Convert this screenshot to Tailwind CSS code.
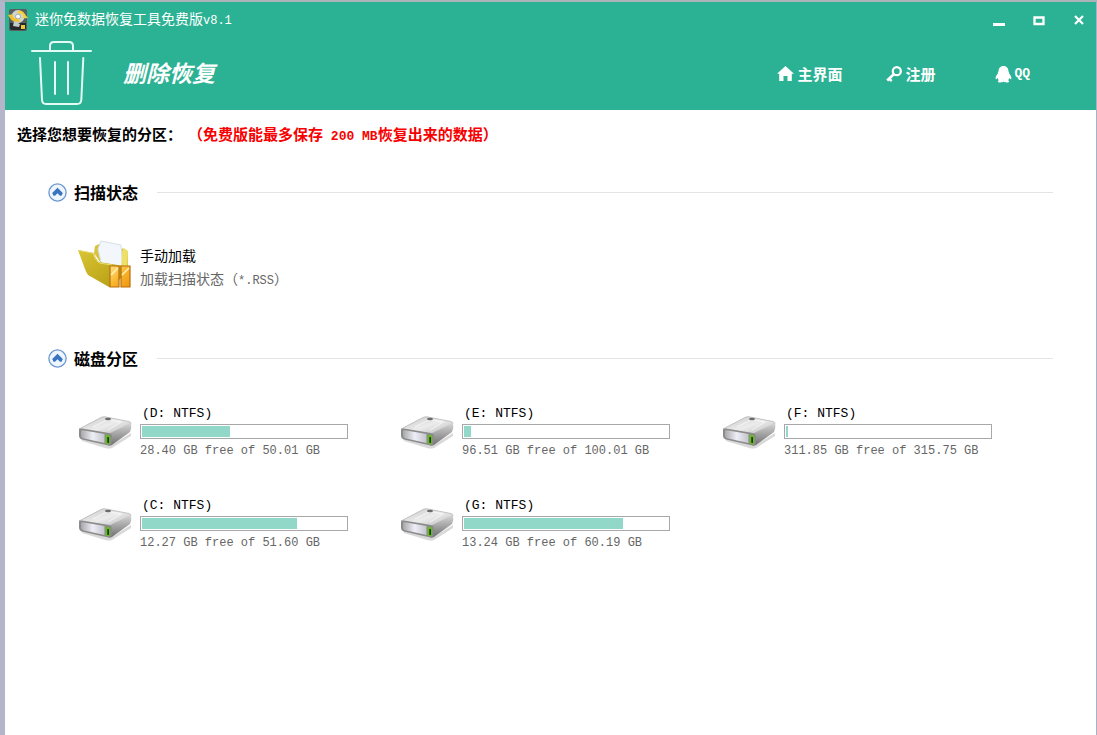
<!doctype html>
<html lang="zh-CN">

<head>
	<meta charset="utf-8" />
	<meta name="viewport" content="width=device-width, initial-scale=1" />
	<title>迷你兔数据恢复工具</title>
	<script src="https://cdn.jsdelivr.net/npm/@tailwindcss/browser@4"></script>
</head>

<body class="min-h-screen flex flex-col bg-white text-black border-t-2 border-l-5 border-r border-t-[#a9b3b8] border-l-[#b4b4cb] border-r-[#a9b0c8] font-['Noto_Sans_CJK_SC',sans-serif]">

	<!-- shared icons -->
	<svg class="size-0" aria-hidden="true">
		<defs>
			<linearGradient id="driveTop" x1="0" y1="0" x2="1" y2="1">
				<stop offset="0" stop-color="#c4c4c4" />
				<stop offset="0.5" stop-color="#ececec" />
				<stop offset="1" stop-color="#b4b4b4" />
			</linearGradient>
			<linearGradient id="driveSide" x1="0" y1="0" x2="0" y2="1">
				<stop offset="0" stop-color="#d6d6d6" />
				<stop offset="1" stop-color="#6e6e6e" />
			</linearGradient>
			<linearGradient id="driveFront" x1="0" y1="0" x2="1" y2="0">
				<stop offset="0" stop-color="#a8a8ac" />
				<stop offset="0.5" stop-color="#eeeef6" />
				<stop offset="1" stop-color="#c4c4cc" />
			</linearGradient>
			<linearGradient id="folderBody" x1="0" y1="0" x2="1" y2="1">
				<stop offset="0" stop-color="#d9c534" />
				<stop offset="1" stop-color="#b39a10" />
			</linearGradient>
			<linearGradient id="boxBody" x1="0" y1="0" x2="1" y2="1">
				<stop offset="0" stop-color="#ffe08a" />
				<stop offset="0.5" stop-color="#f9b52c" />
				<stop offset="1" stop-color="#ee9410" />
			</linearGradient>
		</defs>
		<symbol id="drive" viewBox="0 0 54 36">
			<path d="M3 22 L32 31 L53 18 L53 21 L34 33 Q31 34 27 33 L4 26z" fill="#000" opacity="0.15" />
			<path d="M1 14 L23 2.500 Q25 1.500 27 1.800 L51 6.500 Q53 7 53 9 L31 20z" fill="url(#driveTop)" stroke="#a5a5a5" stroke-width="0.6" />
			<path d="M30 19 L53 8 Q54 13 52 17 L34 30 Q31.500 31.500 29.500 30z" fill="url(#driveSide)" />
			<path d="M1 14.500 Q1.500 13.300 4 13.500 L31 18 Q34 18.500 34 21.500 L33.500 28.500 Q33 31 29 30.300 L4 24.500 Q1 23.500 1 20.500z" fill="#8b8b8b" />
			<path d="M3 16 Q3 15 5 15.300 L26.500 19 L26.500 28 L5 23.200 Q3 22.500 3 20.500z" fill="url(#driveFront)" />
			<path d="M15 12 L30 4.500 L43 7 L30 15" fill="none" stroke="#fff" stroke-width="0.8" opacity="0.8" />
			<ellipse cx="30" cy="4" rx="3" ry="1.300" fill="#6c6c6c" />
			<path d="M27.500 19.500 L31.500 20.300 Q32.500 20.500 32.400 22 L32 28.500 Q31.500 29.500 30 29.300 L27.500 28.800z" fill="#6cb52d" />
			<path d="M29.300 22 L31 22.300 V28 L29.300 27.700z" fill="#173d0c" />
		</symbol>
		<symbol id="chevron" viewBox="0 0 19 19">
			<circle cx="9.500" cy="9.500" r="8.600" fill="#eef5fc" stroke="#6b96cf" stroke-width="1.300" />
			<path d="M9.500 4.800 L14.800 10 L13.500 12.800 H12 L9.500 10.300 L7 12.800 H5.500 L4.200 10z" fill="#3a74c0" />
		</symbol>
	</svg>

	<header class="bg-[#2bb193] text-white">
		<div class="flex items-center justify-between h-9 pl-[3px] pr-[9px]">
			<div class="flex items-center gap-[7px]">
				<svg class="w-5 h-6" viewBox="0 0 20 24" aria-hidden="true">
					<rect x="1" y="1" width="18" height="22" rx="2" fill="#56605e" />
					<path d="M2 15 H18 V20 Q18 22 16 22 H4 Q2 22 2 20z" fill="#252b2a" />
					<circle cx="10" cy="8.500" r="6.500" fill="#cfd6d4" />
					<circle cx="10" cy="8.500" r="2.500" fill="#f6f8f7" stroke="#85908d" stroke-width="0.700" />
					<path d="M0 7 L5 6 L4.500 8 Q7 12 11 11 L12 13.500 Q5 15 2 10z" fill="#f2c22b" />
					<path d="M20 10 L14 10.500 L15.300 8.500 Q14 5 10 5.500 L9 3 Q15 1.500 17.500 7z" fill="#f5cf42" />
					<path d="M6 13 L12 16 L11 19 L5 18z" fill="#c3cbc9" />
					<rect x="13" y="17" width="4" height="4" fill="#f0c437" />
				</svg>
				<h1 class="text-[14px] leading-5 font-['Liberation_Mono','Noto_Sans_CJK_SC',monospace]">迷你免数据恢复工具免费版<span class="text-[12px]">v8.1</span></h1>
			</div>
			<div class="flex items-center gap-6">
				<button type="button" aria-label="最小化" class="size-4">
					<svg class="size-4" viewBox="0 0 16 16"><path d="M2 11h12v3H2z" fill="#fff" /></svg>
				</button>
				<button type="button" aria-label="最大化" class="size-4">
					<svg class="size-4" viewBox="0 0 16 16"><path d="M3.500 5.500h9v6.500h-9z" fill="none" stroke="#fff" stroke-width="2.300" /></svg>
				</button>
				<button type="button" aria-label="关闭" class="size-4">
					<svg class="size-4" viewBox="0 0 16 16"><path d="M4 4l8 8M12 4l-8 8" stroke="#fff" stroke-width="2.200" /></svg>
				</button>
			</div>
		</div>

		<div class="flex items-center h-18 pl-[26px] pr-[66px]">
			<svg class="w-[61px] h-[66px]" viewBox="0 0 61 66" fill="none" stroke="#e4fbf5" stroke-width="2" stroke-linecap="round" stroke-linejoin="round" aria-hidden="true">
				<path d="M1 10h59" />
				<path d="M19 10V5q0-4 4-4h15q4 0 4 4v5" />
				<path d="M9 17l2 42q.3 4 4 4h31q4 0 4.300-4l2-42" />
				<path d="M24 21v32M37 21v32" />
			</svg>
			<h2 class="ml-[31px] pb-1 text-[23px] leading-8 font-bold italic">删除恢复</h2>
			<nav class="ml-auto text-[15px] leading-6 font-bold">
				<ul class="grid grid-cols-[109px_109px_auto]">
					<li>
						<a href="#" class="flex items-center gap-[3px] hover:text-gray-200">
							<svg class="size-[17px]" viewBox="0 0 17 17" fill="currentColor"><path d="M8.500 0L17 7.800h-2.200V15H10.500v-5h-4v5H2.200V7.800H0z" /></svg>
							主界面
						</a>
					</li>
					<li>
						<a href="#" class="flex items-center gap-[2px] hover:text-gray-200">
							<svg class="size-[17px]" viewBox="0 0 17 17" fill="none" stroke="currentColor"><circle cx="10.800" cy="5.200" r="4" stroke-width="2.300" /><path d="M8 8L1.200 14.500M2.800 12.800l3 2.200" stroke-width="2.600" /></svg>
							注册
						</a>
					</li>
					<li>
						<a href="#" class="flex items-center gap-[2px] hover:text-gray-200">
							<svg class="size-[17px]" viewBox="0 0 17 17" fill="currentColor"><path d="M8.500 0C5 0 3.500 2.500 3.500 5.500C2.800 6.200 2.700 7 2.900 7.600C1.200 9.500.3 11.500.7 13c.3.700 1.200.2 2-.9.200.8.600 1.500 1.200 2.100C2.300 15 2.500 16.500 5 16.500c1.700 0 2.800-.3 3.500-.9.700.6 1.800.9 3.500.9 2.500 0 2.700-1.500 1.100-2.300.600-.6 1-1.300 1.200-2.100.8 1.100 1.700 1.600 2 .9.400-1.500-.5-3.500-2.200-5.400.2-.6.100-1.400-.6-2.100C13.500 2.500 12 0 8.500 0z" /></svg>
							<span class="text-[13px] font-['Liberation_Mono',monospace]">QQ</span>
						</a>
					</li>
				</ul>
			</nav>
		</div>
	</header>

	<main class="pt-3">
		<p class="flex gap-1.5 pl-3 text-[15px] leading-6 font-bold">
			<span>选择您想要恢复的分区：</span>
			<span class="text-[#f80000]">（免费版能最多保存<span class="text-[13px] font-['Liberation_Mono',monospace]"> 200 MB</span>恢复出来的数据）</span>
		</p>

		<section class="mt-[33px] px-[43px]">
			<div class="flex items-center gap-[7px] h-5">
				<button type="button" aria-label="收起扫描状态" class="size-[19px]"><svg class="size-[19px]"><use href="#chevron" /></svg></button>
				<h3 class="text-[16px] leading-5 font-bold">扫描状态</h3>
				<div class="flex-1 h-px ml-3 bg-[#e4e4e4]"></div>
			</div>
			<a href="#" class="flex items-center gap-2 w-fit mt-9 ml-[30px]">
				<svg class="size-[54px]" viewBox="0 0 54 54" aria-hidden="true">
					<path d="M16 14 L17 7 L21 5 L47 10 L50 13 L50 34 L36 44z" fill="#d8c43c" />
					<path d="M20 10 L23 2 L43 6 L45 31 L24 27z" fill="#f3f7fc" stroke="#d5dfea" />
					<path d="M44 13 L46 9 L50 12 L49 30 L43 31z" fill="#ecdf6a" />
					<path d="M0 11 L16 14 Q18 21 21 23 L46 27 Q49 28 48 32 L36 48 L31 48 L10 36 Q8 33 7 30z" fill="url(#folderBody)" />
					<path d="M1 11.500 L15 14.300 Q17 21 21 24 L34 26" fill="none" stroke="#eadb70" />
					<g fill="url(#boxBody)" stroke="#b96f0c" stroke-width="1.200">
						<path d="M32 27h9v21h-9zM43 27h9v21h-9z" />
					</g>
					<path d="M33 36L40 29M44 36L51 29" stroke="#fff0b8" stroke-width="1.500" />
				</svg>
				<span class="pt-1.5 text-[14px] leading-[23px]">
					<span class="block">手动加载</span>
					<span class="block text-[#666]">加载扫描状态（<span class="text-[12px] font-['Liberation_Mono',monospace]">*.RSS</span>）</span>
				</span>
			</a>
		</section>

		<section class="mt-[55px] px-[43px]">
			<div class="flex items-center gap-[7px] h-5">
				<button type="button" aria-label="收起磁盘分区" class="size-[19px]"><svg class="size-[19px]"><use href="#chevron" /></svg></button>
				<h3 class="text-[16px] leading-5 font-bold">磁盘分区</h3>
				<div class="flex-1 h-px ml-3 bg-[#e4e4e4]"></div>
			</div>
			<ul class="grid grid-cols-3 gap-y-8 mt-[35px] pl-[30px] pr-[9px] font-['Liberation_Mono',monospace]">
				<li>
					<a href="#" class="flex items-center gap-2">
						<svg class="w-[54px] h-9"><use href="#drive" /></svg>
						<span class="w-[208px]">
							<span class="block pl-0.5 text-[13px] leading-[21px]">(D: NTFS)</span>
							<span class="block h-[15px] p-px border border-[#a8a8a8]"><span class="block h-full bg-[#91d8c8]" style="width: 43.2%"></span></span>
							<span class="block text-[12px] leading-6 text-[#666] whitespace-nowrap">28.40 GB free of 50.01 GB</span>
						</span>
					</a>
				</li>
				<li>
					<a href="#" class="flex items-center gap-2">
						<svg class="w-[54px] h-9"><use href="#drive" /></svg>
						<span class="w-[208px]">
							<span class="block pl-0.5 text-[13px] leading-[21px]">(E: NTFS)</span>
							<span class="block h-[15px] p-px border border-[#a8a8a8]"><span class="block h-full bg-[#91d8c8]" style="width: 3.5%"></span></span>
							<span class="block text-[12px] leading-6 text-[#666] whitespace-nowrap">96.51 GB free of 100.01 GB</span>
						</span>
					</a>
				</li>
				<li>
					<a href="#" class="flex items-center gap-2">
						<svg class="w-[54px] h-9"><use href="#drive" /></svg>
						<span class="w-[208px]">
							<span class="block pl-0.5 text-[13px] leading-[21px]">(F: NTFS)</span>
							<span class="block h-[15px] p-px border border-[#a8a8a8]"><span class="block h-full bg-[#91d8c8]" style="width: 1.2%"></span></span>
							<span class="block text-[12px] leading-6 text-[#666] whitespace-nowrap">311.85 GB free of 315.75 GB</span>
						</span>
					</a>
				</li>
				<li>
					<a href="#" class="flex items-center gap-2">
						<svg class="w-[54px] h-9"><use href="#drive" /></svg>
						<span class="w-[208px]">
							<span class="block pl-0.5 text-[13px] leading-[21px]">(C: NTFS)</span>
							<span class="block h-[15px] p-px border border-[#a8a8a8]"><span class="block h-full bg-[#91d8c8]" style="width: 76.2%"></span></span>
							<span class="block text-[12px] leading-6 text-[#666] whitespace-nowrap">12.27 GB free of 51.60 GB</span>
						</span>
					</a>
				</li>
				<li>
					<a href="#" class="flex items-center gap-2">
						<svg class="w-[54px] h-9"><use href="#drive" /></svg>
						<span class="w-[208px]">
							<span class="block pl-0.5 text-[13px] leading-[21px]">(G: NTFS)</span>
							<span class="block h-[15px] p-px border border-[#a8a8a8]"><span class="block h-full bg-[#91d8c8]" style="width: 78%"></span></span>
							<span class="block text-[12px] leading-6 text-[#666] whitespace-nowrap">13.24 GB free of 60.19 GB</span>
						</span>
					</a>
				</li>
			</ul>
		</section>
	</main>

</body>

</html>
